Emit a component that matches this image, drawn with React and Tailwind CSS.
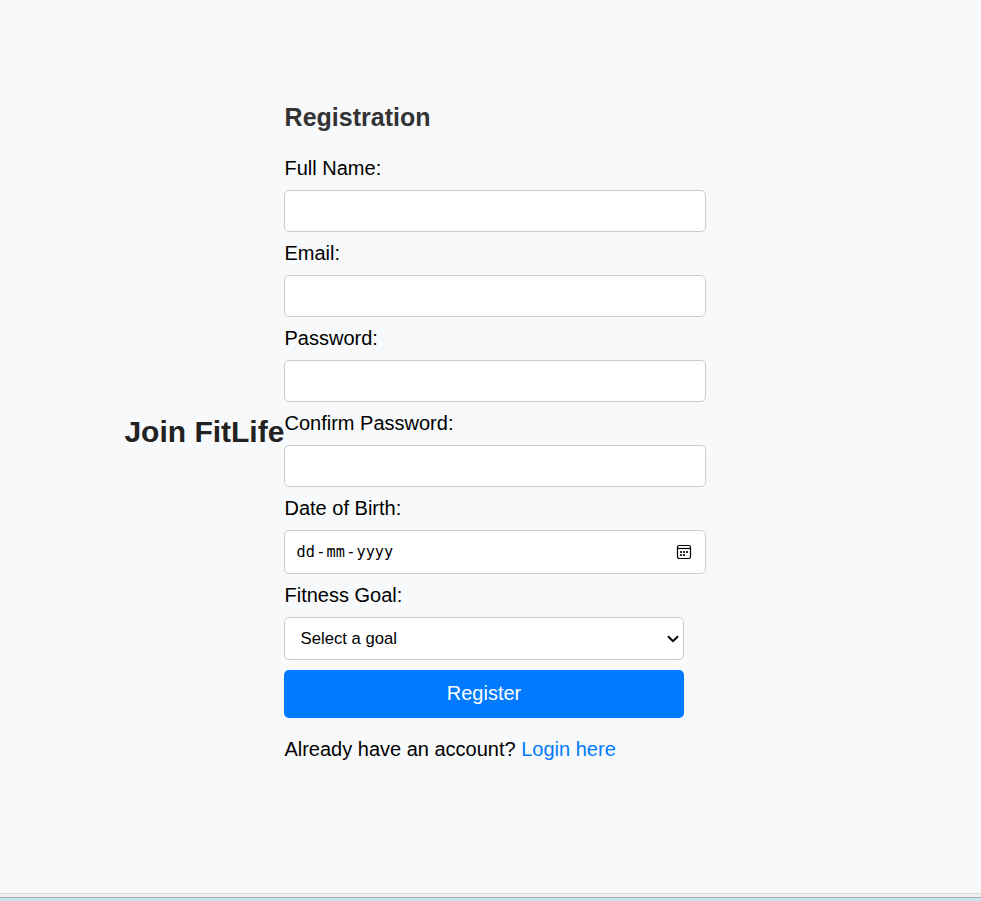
function Field({ label, children }) {
  return (
    <div className="flex flex-col">
      <label className="mb-2.5 h-6 pl-[0.5px] text-[20px] leading-6 text-black">{label}</label>
      {children}
    </div>
  );
}

const inputClass = "w-[422px] rounded-[5px] border border-[#ccc] bg-white outline-none";

function CalendarIcon() {
  return (
    <svg width="16" height="16" viewBox="0 0 16 16" fill="none">
      <rect x="1.5" y="1.5" width="13" height="13" rx="1.8" stroke="#000" strokeWidth="1.2" />
      <path d="M1.5 4.5h13" stroke="#000" strokeWidth="1.2" />
      <path d="M4 7h2v2H4zM7 7h2v2H7zM10 7h2v2h-2zM4 10h2v2H4zM7 10h2v2H7z" fill="#333" />
    </svg>
  );
}

export default function App() {
  return (
    <div className="flex h-[901px] w-[981px] flex-col overflow-hidden bg-[#f8f9fb] font-['Liberation_Sans',Arial,sans-serif]">
      <main className="flex h-[893px] shrink-0 items-start pl-[124px]">
        <h1 className="mt-[414px] w-[160px] shrink-0 whitespace-nowrap pl-[0.4px] text-[30px] leading-9 font-bold text-[#222]">
          Join FitLife
        </h1>
        <form className="mt-[102px] flex w-[422px] flex-col">
          <h2 className="mb-6 h-[30px] pl-[0.6px] text-[25px] leading-[30px] font-bold text-[#333]">Registration</h2>
          <div className="flex flex-col gap-[9px]">
            <Field label="Full Name:">
              <input type="text" className={`${inputClass} h-[42px] px-3`} />
            </Field>
            <Field label="Email:">
              <input type="email" className={`${inputClass} h-[42px] px-3`} />
            </Field>
            <Field label="Password:">
              <input type="password" className={`${inputClass} h-[42px] px-3`} />
            </Field>
            <Field label="Confirm Password:">
              <input type="password" className={`${inputClass} h-[42px] px-3`} />
            </Field>
            <Field label="Date of Birth:">
              <div className={`${inputClass} flex h-[44px] items-center justify-between pr-[13px] pl-[11.6px]`}>
                <span className="flex font-['DejaVu_Sans_Mono',monospace] text-[15.2px] leading-5 text-black">
                  <span>dd</span>
                  <span className="w-[11.7px] text-center">-</span>
                  <span>mm</span>
                  <span className="w-[11.7px] text-center">-</span>
                  <span>yyyy</span>
                </span>
                <CalendarIcon />
              </div>
            </Field>
            <Field label="Fitness Goal:">
              <div className="flex h-[43px] w-[400px] items-center justify-between rounded-[5px] border border-[#ccc] bg-white pr-1 pl-[15.6px] text-[16.67px] leading-5 text-black">
                <span>Select a goal</span>
                <svg width="12" height="8" viewBox="0 0 12 8" fill="none">
                  <path d="M1 1.2l5 4.9 5-4.9" stroke="#000" strokeWidth="2" />
                </svg>
              </div>
            </Field>
          </div>
          <button
            type="button"
            className="mt-2.5 h-12 w-[400px] rounded-[5px] bg-[#007bff] pb-0.5 text-[20px] leading-6 text-white"
          >
            Register
          </button>
          <p className="mt-[19px] pl-[0.4px] text-[20px] leading-6 text-black">
            Already have an account?{" "}
            <a href="#login" className="text-[#007bff]">
              Login here
            </a>
          </p>
        </form>
      </main>
      <footer className="flex shrink-0 flex-col">
        <div className="h-px bg-[#d9dadb]" />
        <div className="h-[3px] bg-[#f0f0f0]" />
        <div className="h-px bg-[#a5adb1]" />
        <div className="h-[3px] bg-[#c9e6ef]" />
      </footer>
    </div>
  );
}
